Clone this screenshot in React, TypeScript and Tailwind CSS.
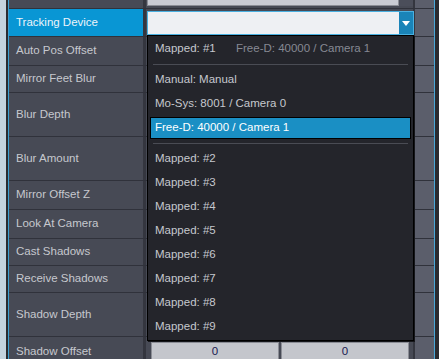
import React from "react";

const rows: { label: string; h: number }[] = [
  { label: "", h: 9 },
  { label: "Tracking Device", h: 28 },
  { label: "Auto Pos Offset", h: 29 },
  { label: "Mirror Feet Blur", h: 27 },
  { label: "Blur Depth", h: 44 },
  { label: "Blur Amount", h: 44 },
  { label: "Mirror Offset Z", h: 29 },
  { label: "Look At Camera", h: 29 },
  { label: "Cast Shadows", h: 27 },
  { label: "Receive Shadows", h: 27 },
  { label: "Shadow Depth", h: 44 },
  { label: "Shadow Offset", h: 30 },
];

const font = { fontFamily: '"Liberation Sans", Arial, sans-serif' };

export default function App() {
  return (
    <div
      className="relative flex w-[439px] h-[359px] overflow-hidden bg-[#2a2b30] text-[11.5px]"
      style={font}
    >
      <div className="w-[6px] shrink-0 bg-[#c3d3de]" />
      <div className="w-[2px] shrink-0 bg-[#2a2b30]" />
      <div className="w-[1px] shrink-0 bg-[#3b9fd0]" />
      <div className="flex w-[425px] shrink-0 flex-col">
        {rows.map((r, i) => {
          const selected = r.label === "Tracking Device";
          return (
            <div
              key={i}
              className="flex shrink-0 border-b border-[#30323b]"
              style={{ height: r.h }}
            >
              <div
                className={
                  "flex w-[134px] shrink-0 items-center pl-[7px] " +
                  (selected ? "bg-[#0996d4] text-[#eef4fa]" : "bg-[#474a55] text-[#c6c8ce]")
                }
              >
                {r.label}
              </div>
              <div className="w-[3px] shrink-0 bg-[#34363f]" />
              <div className="relative w-[267px] shrink-0 bg-[#474a55]">
                {i === 0 && (
                  <div className="flex h-[6px] pl-[1px]">
                    <div className="w-[252px] bg-[#c9cbd3] border-b border-x border-[#8b8d95]" />
                    <div className="w-[14px] bg-[#4b4e5a]" />
                  </div>
                )}
                {i === rows.length - 1 && (
                  <div className="flex gap-[2px] pl-[5px] pt-[5px]">
                    <div className="flex h-[20px] w-[128px] items-center justify-center border border-[#8b8d95] bg-[#c4c6cc] text-[#1a1a50]">
                      0
                    </div>
                    <div className="flex h-[20px] w-[128px] items-center justify-center border border-[#8b8d95] bg-[#c4c6cc] text-[#1a1a50]">
                      0
                    </div>
                  </div>
                )}
              </div>
              <div className="w-[2px] shrink-0 bg-[#34363f]" />
              <div className="w-[19px] shrink-0 bg-[#5b5e6b]" />
            </div>
          );
        })}
      </div>
      <div className="w-[1px] shrink-0 bg-[#4aa8d8]" />
      <div className="w-[4px] shrink-0 bg-[#2a2b30]" />

      {/* Combo box */}
      <div className="absolute left-[147px] top-[11px] flex h-[24px] w-[267px] border border-[#4ab0e0] bg-[#eef0f3]">
        <div className="flex-1" />
        <div className="flex w-[14px] items-center justify-center bg-[#1a84b8]">
          <svg width="8" height="5" viewBox="0 0 8 5">
            <polygon points="0,0 8,0 4,5" fill="#ffffff" />
          </svg>
        </div>
      </div>

      {/* Dropdown */}
      <div className="absolute left-[147px] top-[35px] flex h-[306px] w-[267px] flex-col border border-black bg-[#24252b] pt-[1px] text-[#c6c8ce] shadow-[1px_1px_0_#15161a]">
        <div className="flex h-[24px] items-center pl-[7px]">
          <span className="w-[81px]">Mapped: #1</span>
          <span className="text-[#868993]">Free-D: 40000 / Camera 1</span>
        </div>
        <div className="mx-[5px] mt-[3px] mb-[3px] h-[1px] bg-[#4a4c54]" />
        <div className="flex h-[24px] items-center pl-[7px]">Manual: Manual</div>
        <div className="flex h-[24px] items-center pl-[7px]">Mo-Sys: 8001 / Camera 0</div>
        <div className="flex h-[24px] items-stretch px-[2px] py-[1px]">
          <div className="flex flex-1 items-center border border-black bg-[#1a8fc4] pl-[4px] text-white">
            Free-D: 40000 / Camera 1
          </div>
        </div>
        <div className="mx-[5px] mt-[3px] mb-[3px] h-[1px] bg-[#4a4c54]" />
        {[2, 3, 4, 5, 6, 7, 8, 9].map((n) => (
          <div key={n} className="flex h-[24px] items-center pl-[7px]">
            Mapped: #{n}
          </div>
        ))}
      </div>
    </div>
  );
}
